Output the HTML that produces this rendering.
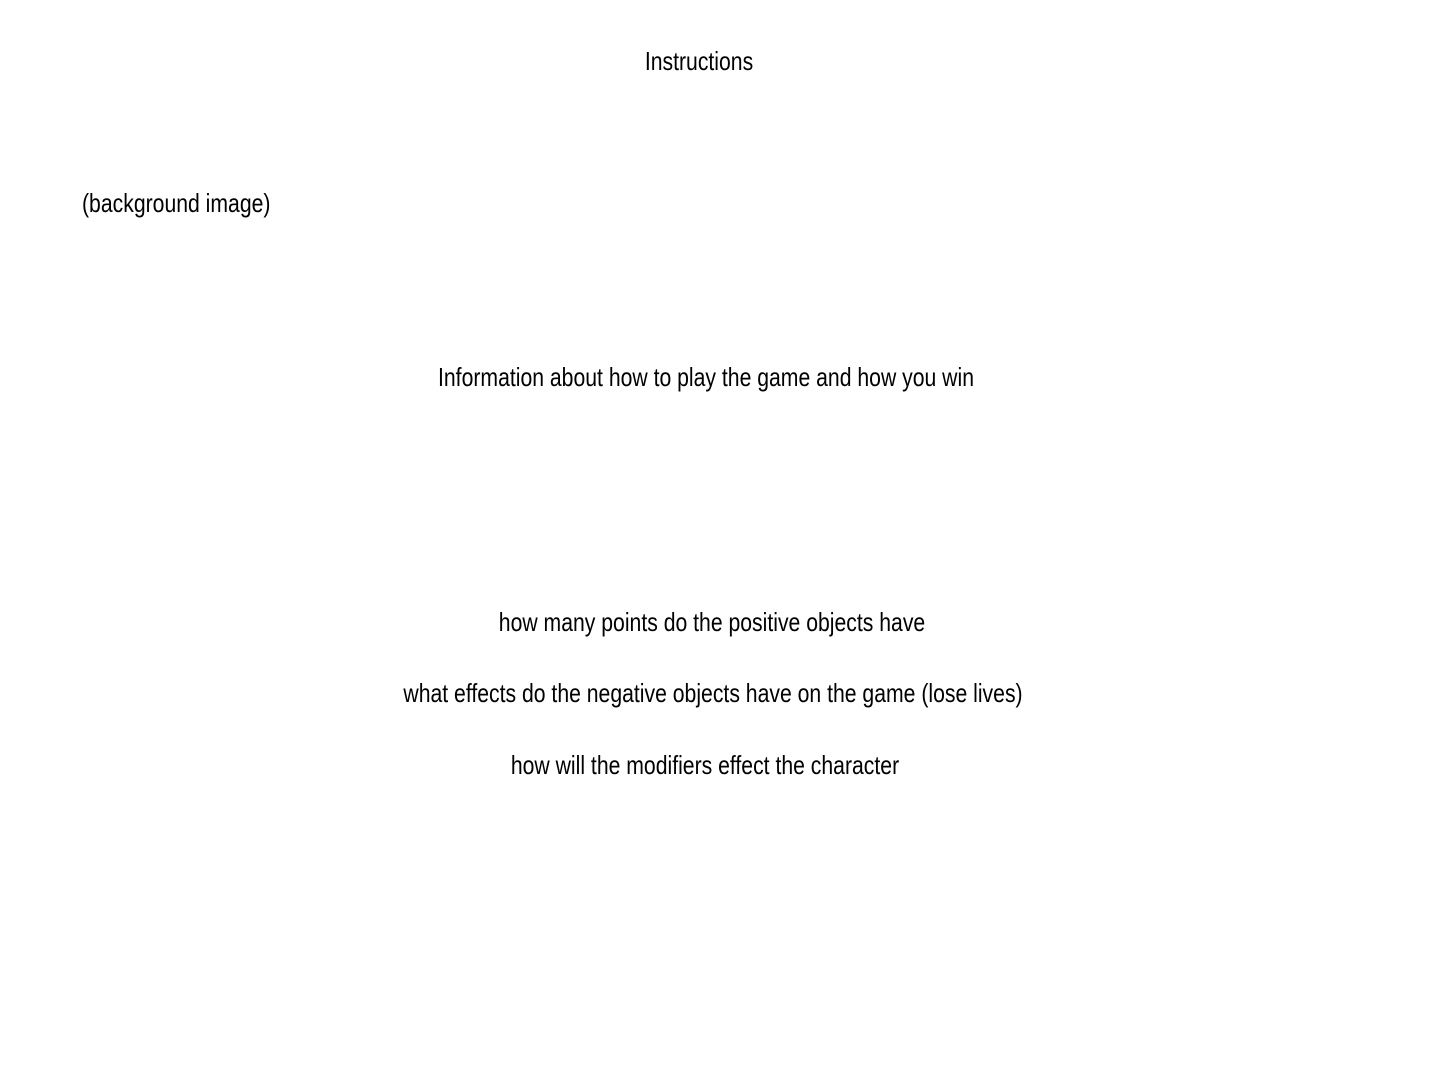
<!DOCTYPE html>
<html><head><meta charset="utf-8"><style>
html,body{margin:0;padding:0;background:#fff;width:1440px;height:1080px;overflow:hidden}
.t{position:absolute;font-family:"Liberation Sans",sans-serif;font-size:26px;line-height:30px;color:#000;white-space:nowrap;transform:translateX(-50%) scaleX(0.815);}
.l{position:absolute;font-family:"Liberation Sans",sans-serif;font-size:26px;line-height:30px;color:#000;white-space:nowrap;transform:scaleX(0.815);transform-origin:left center;}
</style></head><body>
<div class="t" style="left:699px;top:46px">Instructions</div>
<div class="l" style="left:82px;top:188px">(background image)</div>
<div class="t" style="left:706px;top:362px">Information about how to play the game and how you win</div>
<div class="t" style="left:712px;top:607px">how many points do the positive objects have</div>
<div class="t" style="left:713px;top:678px">what effects do the negative objects have on the game (lose lives)</div>
<div class="t" style="left:705px;top:750px">how will the modifiers effect the character</div>
</body></html>
